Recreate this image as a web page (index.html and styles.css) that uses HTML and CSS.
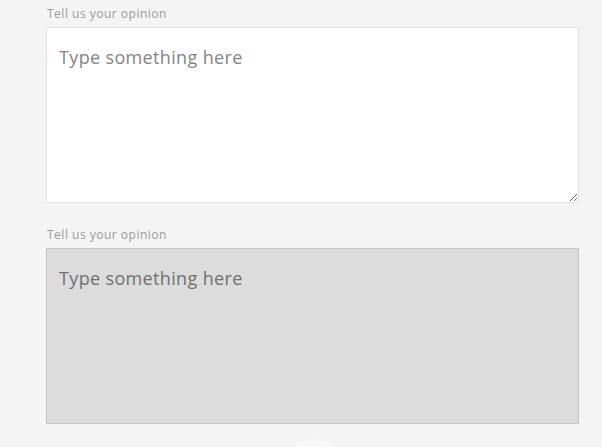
FILE: index.html
```html
<!DOCTYPE html>
<html lang="en">

<head>
    <meta charset="UTF-8">
    <meta name="viewport" content="width=device-width, initial-scale=1.0">
    <title>Opinion</title>
    <link rel="stylesheet" href="styles.css">
</head>

<body>
    <div class="form">
        <div class="field">
            <label for="opinion">Tell us your opinion</label>
            <textarea id="opinion" placeholder="Type something here"></textarea>
        </div>
        <div class="field">
            <label for="opinion-disabled">Tell us your opinion</label>
            <textarea id="opinion-disabled" placeholder="Type something here" disabled></textarea>
        </div>
        <div class="round"></div>
    </div>
</body>

</html>
```

FILE: styles.css
```css
* {
    margin: 0;
    padding: 0;
    box-sizing: border-box;
    font-family: "Open Sans", sans-serif;
}

body {
    background: #f4f4f4;
    padding: 5px 0 0 46px;
    overflow: hidden;
}

.form {
    width: 533px;
    display: flex;
    flex-direction: column;
}

.field {
    display: flex;
    flex-direction: column;
    margin-bottom: 23px;
}

.field label {
    font-size: 12px;
    line-height: 18px;
    letter-spacing: 0.5px;
    color: #9a9a9a;
    padding-left: 1px;
    margin-bottom: 4px;
}

.field textarea {
    height: 176px;
    width: 100%;
    background: #fff;
    border: 1px solid #e1e1e1;
    outline: none;
    padding: 17px 12px 16px;
    font-size: 18px;
    letter-spacing: 0.35px;
    color: #555;
}

.field textarea::placeholder {
    color: #858585;
}

.field textarea:disabled {
    background: #dcdcdc;
    border-color: #c4c4c4;
    resize: none;
}

.field textarea:disabled::placeholder {
    color: #707070;
}

.round {
    width: 56px;
    height: 56px;
    border-radius: 50%;
    background: #f8f8f8;
    align-self: center;
    margin-top: -8px;
}
```
